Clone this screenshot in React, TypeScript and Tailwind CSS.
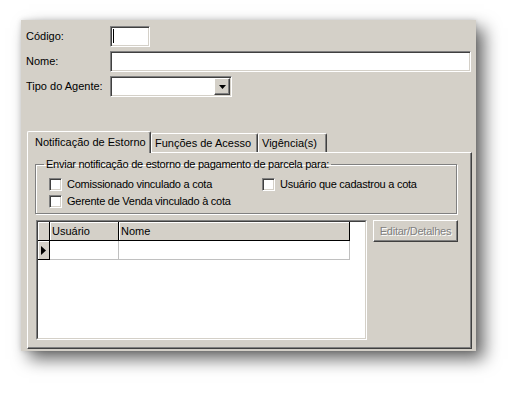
const font = { fontFamily: '"Liberation Sans", Arial, sans-serif' };

const sunken =
  "border border-t-[#808080] border-l-[#808080] border-b-white border-r-white shadow-[inset_1px_1px_0_#404040,inset_-1px_-1px_0_#d4d0c8]";
const raised =
  "border border-t-white border-l-white border-r-[#404040] border-b-[#404040] shadow-[inset_-1px_-1px_0_#808080,inset_1px_1px_0_#d4d0c8]";

function Checkbox({ label }: { label: string }) {
  return (
    <label className="flex items-center h-[17px] gap-[5px]">
      <span className={`w-[13px] h-[13px] bg-white ${sunken}`} />
      <span>{label}</span>
    </label>
  );
}

function Tab({ label, active, w }: { label: string; active?: boolean; w: number }) {
  if (active) {
    return (
      <div
        className="relative z-10 -mb-[1px] h-[22px] flex items-center pl-[7px] bg-[#d4d0c8] border-l border-t border-white rounded-tl-[2px] rounded-tr-[2px] border-r border-r-[#404040] shadow-[inset_-1px_0_0_#808080]"
        style={{ width: w }}
      >
        {label}
      </div>
    );
  }
  return (
    <div
      className="h-[19px] flex items-center pl-[3px] border-l border-t border-white rounded-tl-[2px] rounded-tr-[2px] border-r border-r-[#404040] shadow-[inset_-1px_0_0_#808080]"
      style={{ width: w }}
    >
      {label}
    </div>
  );
}

export default function App() {
  return (
    <div className="w-[518px] h-[394px] bg-white pl-[21px] pt-[20px] text-[11px] text-black" style={font}>
      <div className="w-[455px] h-[331px] bg-[#d4d0c8] pt-[6px] pl-[5px] flex flex-col shadow-[0_0_5px_rgba(0,0,0,0.15),8px_8px_16px_rgba(0,0,0,0.6)]">
        <div className="flex items-center h-[21px]">
          <span className="w-[84px]">Código:</span>
          <div className={`w-[40px] h-[21px] bg-white ${sunken} pl-[2px] pt-[2px]`}>
            <div className="w-[1px] h-[14px] bg-black" />
          </div>
        </div>
        <div className="flex items-center h-[21px] mt-[4px]">
          <span className="w-[84px]">Nome:</span>
          <div className={`w-[361px] h-[21px] bg-white ${sunken}`} />
        </div>
        <div className="flex items-center h-[21px] mt-[4px]">
          <span className="w-[84px]">Tipo do Agente:</span>
          <div className={`w-[122px] h-[21px] bg-white ${sunken} p-[1px] flex justify-end`}>
            <div className={`w-[16px] h-[17px] bg-[#d4d0c8] ${raised} flex items-center justify-center`}>
              <svg width="7" height="4" viewBox="0 0 7 4">
                <polygon points="0,0 7,0 3.5,4" fill="#000" />
              </svg>
            </div>
          </div>
        </div>

        <div className="mt-[33px] ml-[1px] w-[445px] flex flex-col">
          <div className="flex items-end h-[22px]">
            <Tab label="Notificação de Estorno" active w={124} />
            <Tab label="Funções de Acesso" w={107} />
            <Tab label="Vigência(s)" w={69} />
          </div>
          <div className="h-[197px] border-l border-t border-white border-r border-b border-r-[#404040] border-b-[#404040] shadow-[inset_-1px_-1px_0_#808080] pt-[5px] pl-[7px]">
            <fieldset className="w-[422px] border border-[#808080] shadow-[1px_1px_0_white,inset_1px_1px_0_white] pb-[3px] tracking-[-0.25px]">
              <legend className="ml-[8px] px-[2px] leading-[13px]">
                Enviar notificação de estorno de pagamento de parcela para:
              </legend>
              <div className="flex pt-[5px] pl-[13px]">
                <div className="w-[213px] flex flex-col">
                  <Checkbox label="Comissionado vinculado a cota" />
                  <Checkbox label="Gerente de Venda vinculado à cota" />
                </div>
                <div className="flex flex-col">
                  <Checkbox label="Usuário que cadastrou a cota" />
                </div>
              </div>
            </fieldset>

            <div className="flex items-start mt-[6px] ml-[1px] gap-[6px]">
              <div className="w-[331px] h-[120px] bg-white border border-t-[#808080] border-l-[#808080] border-b-white border-r-white">
                <div className="h-full border border-t-[#404040] border-l-[#404040] border-b-[#d4d0c8] border-r-[#d4d0c8]">
                  <div className="flex h-[19px]">
                    <div className="w-[12px] bg-[#d4d0c8] border-r border-b border-black shadow-[inset_1px_1px_0_white]" />
                    <div className="w-[69px] bg-[#d4d0c8] border-r border-b border-black shadow-[inset_1px_1px_0_white] pl-[2px] flex items-center">
                      Usuário
                    </div>
                    <div className="w-[231px] bg-[#d4d0c8] border-r border-b border-black shadow-[inset_1px_1px_0_white] pl-[2px] flex items-center">
                      Nome
                    </div>
                  </div>
                  <div className="flex h-[19px]">
                    <div className="w-[12px] bg-[#d4d0c8] border-r border-b border-black shadow-[inset_1px_1px_0_white] flex items-center justify-center">
                      <svg width="5" height="9" viewBox="0 0 5 9">
                        <polygon points="0,0 5,4.5 0,9" fill="#000" />
                      </svg>
                    </div>
                    <div className="w-[69px] border-r border-b border-[#c0c0c0]" />
                    <div className="w-[231px] border-r border-b border-[#c0c0c0]" />
                  </div>
                </div>
              </div>
              <button
                disabled
                className={`w-[85px] h-[22px] bg-[#d4d0c8] ${raised} text-[#808080] [text-shadow:1px_1px_0_white] tracking-[-0.25px]`}
              >
                Editar/Detalhes
              </button>
            </div>
          </div>
        </div>
      </div>
    </div>
  );
}
